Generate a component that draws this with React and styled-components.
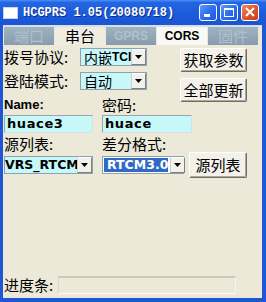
import React from 'react';
import styled, { createGlobalStyle } from 'styled-components';

const cjk = `"Noto Sans CJK SC", "Noto Sans", sans-serif`;
const latin = `"Liberation Sans", Arial, sans-serif`;
const wide = `"DejaVu Sans", Verdana, sans-serif`;

const GlobalStyle = createGlobalStyle`
  html, body {
    margin: 0;
    padding: 0;
    width: 266px;
    height: 302px;
    overflow: hidden;
    background: #1f56d6;
  }
`;

const Window = styled.div`
  width: 266px;
  height: 302px;
  display: flex;
  flex-direction: column;
  background: #ece9d8;
`;

const TitleBar = styled.div`
  height: 25px;
  flex: none;
  display: flex;
  align-items: center;
  padding: 0 7px 0 4px;
  box-sizing: border-box;
  background: linear-gradient(to bottom, #4a8ff7 0%, #2366e4 10%, #1c5bdb 55%, #1a55d2 100%);
`;

const AppIcon = styled.div`
  width: 13px;
  height: 10px;
  background: #fff;
  box-shadow: 0 0 0 1px #c8d4f0;
`;

const Title = styled.div`
  margin-left: 6px;
  font-family: "Liberation Mono", monospace;
  font-weight: 700;
  font-size: 12px;
  color: #fff;
  text-shadow: 1px 1px #0b2d8c;
  white-space: nowrap;
`;

const CaptionGroup = styled.div`
  margin-left: auto;
  display: flex;
  gap: 3px;
`;

const CaptionButton = styled.div`
  width: 18px;
  height: 17px;
  box-sizing: border-box;
  border: 1px solid #fff;
  border-radius: 3px;
  display: flex;
  align-items: center;
  justify-content: center;
  background: ${p => p.$close
    ? 'linear-gradient(135deg, #f08b62 0%, #e0552a 50%, #c8401a 100%)'
    : 'linear-gradient(135deg, #5c9cfb 0%, #2d6ef0 50%, #1f58dc 100%)'};
`;

const Frame = styled.div`
  flex: 1;
  min-height: 0;
  display: flex;
  flex-direction: column;
  border-style: solid;
  border-color: #1f56d6;
  border-width: 0 4px 4px 3px;
  background: #ece9d8;
`;

const TabStrip = styled.div`
  height: 20px;
  flex: none;
  display: flex;
  gap: 1px;
  padding: 2px 0 0 1px;
  box-sizing: border-box;
  background: linear-gradient(#d6dfe6 0 2px, #ece9d8 2px);
`;

const tabBg = {
  dim: 'linear-gradient(#a0b3c2, #879cad)',
  open: '#efece2',
  front: '#f8f8f4',
};

const Tab = styled.div`
  width: 50px;
  height: 18px;
  display: flex;
  align-items: center;
  justify-content: center;
  font-family: ${p => (p.$latin ? latin : cjk)};
  font-size: ${p => (p.$latin ? '12px' : '15px')};
  font-weight: ${p => (p.$latin ? 700 : 400)};
  line-height: 18px;
  background: ${p => tabBg[p.$state]};
  color: ${p => (p.$state === 'dim' ? '#b0c0cc' : '#000')};
`;

const Panel = styled.div`
  flex: 1;
  display: flex;
  flex-direction: column;
  padding: 3px 0 4px 1px;
`;

const TopSection = styled.div`
  display: flex;
  align-items: flex-start;
`;

const LeftCol = styled.div`
  width: 176px;
  display: flex;
  flex-direction: column;
`;

const RightCol = styled.div`
  display: flex;
  flex-direction: column;
  gap: 6px;
`;

const Row = styled.div`
  display: flex;
  align-items: center;
  height: ${p => p.$h || 18}px;
  margin-top: ${p => p.$mt || 0}px;
`;

const Label = styled.div`
  width: ${p => (p.$w ? `${p.$w}px` : 'auto')};
  flex: none;
  font-family: ${p => (p.$latin ? latin : cjk)};
  font-size: ${p => (p.$latin ? '13px' : '15px')};
  font-weight: ${p => (p.$latin ? 700 : 400)};
  line-height: 16px;
  color: #000;
  white-space: nowrap;
`;

const ComboBox = styled.div`
  width: ${p => p.$w}px;
  height: 18px;
  flex: none;
  margin-left: ${p => p.$ml || 0}px;
  box-sizing: border-box;
  border: 1px solid #8fa0ae;
  display: flex;
  background: ${p => (p.$selected ? '#fff' : '#c6f8fa')};
`;

const ComboValue = styled.div`
  flex: 1;
  min-width: 0;
  white-space: nowrap;
  display: flex;
  align-items: center;
  padding-left: ${p => p.$pl ?? 3}px;
  font-family: ${cjk};
  font-size: 14px;
  line-height: 16px;
  color: #000;
`;

const Selection = styled.div`
  flex: 1;
  margin: 1px 2px 1px 1px;
  padding-left: 3px;
  display: flex;
  align-items: center;
  background: #316ac5;
  color: #fff;
  font-family: ${wide};
  font-weight: 700;
  font-size: 12.5px;
  line-height: 14px;
`;

const Bold = styled.span`
  font-family: ${p => (p.$narrow ? latin : wide)};
  font-weight: 700;
  font-size: ${p => (p.$narrow ? '12px' : '12.5px')};
`;

const DropButton = styled.div`
  width: 15px;
  flex: none;
  box-sizing: border-box;
  display: flex;
  align-items: center;
  justify-content: center;
  background: #f2f1ec;
  border: 1px solid;
  border-color: #fff #808080 #808080 #d4d0c8;
`;

const TextBox = styled.div`
  width: ${p => p.$w}px;
  height: 18px;
  flex: none;
  margin-left: ${p => p.$ml || 0}px;
  box-sizing: border-box;
  border: 1px solid;
  border-color: #9aa6ac #d8e0e2 #d8e0e2 #9aa6ac;
  background: #c6f8fa;
  padding-left: 2px;
  display: flex;
  align-items: center;
  font-family: ${wide};
  font-weight: 700;
  font-size: 13px;
  line-height: 16px;
  letter-spacing: 0.6px;
  color: #000;
`;

const PushButton = styled.div`
  width: ${p => p.$w}px;
  height: ${p => p.$h}px;
  flex: none;
  margin-left: ${p => p.$ml || 0}px;
  box-sizing: border-box;
  display: flex;
  align-items: center;
  justify-content: center;
  font-family: ${cjk};
  font-size: 15px;
  line-height: 18px;
  color: #000;
  background: #f3f1ea;
  border: 1px solid;
  border-color: #fff #716f64 #716f64 #fff;
  box-shadow: inset -1px -1px #aca899;
  border-radius: 2px;
`;

const Spacer = styled.div`
  flex: 1;
`;

const ProgressBar = styled.div`
  width: 178px;
  height: 18px;
  box-sizing: border-box;
  border-style: solid;
  border-width: 2px 1px 1px 1px;
  border-color: #cdc9b8 #f6f5ef #fbfaf6 #dcd8c8;
  background: #ece9d8;
`;

const Arrow = () => (
  <svg width="7" height="4" viewBox="0 0 7 4">
    <polygon points="0,0 7,0 3.5,4" fill="#000" />
  </svg>
);

const Combo = ({ w, ml, pl, selected, children }) => (
  <ComboBox $w={w} $ml={ml} $selected={selected}>
    {selected ? <Selection>{children}</Selection> : <ComboValue $pl={pl}>{children}</ComboValue>}
    <DropButton><Arrow /></DropButton>
  </ComboBox>
);

const tabs = [
  { text: '端口', state: 'dim' },
  { text: '串台', state: 'open' },
  { text: 'GPRS', state: 'dim', latin: true },
  { text: 'CORS', state: 'front', latin: true },
  { text: '固件', state: 'dim' },
];

export default function App() {
  return (
    <Window>
      <GlobalStyle />
      <TitleBar>
        <AppIcon />
        <Title>HCGPRS 1.05(20080718)</Title>
        <CaptionGroup>
          <CaptionButton>
            <svg width="16" height="15" viewBox="0 0 16 15">
              <rect x="4" y="9" width="6" height="3" fill="#fff" />
            </svg>
          </CaptionButton>
          <CaptionButton>
            <svg width="16" height="15" viewBox="0 0 16 15">
              <rect x="3.5" y="3.5" width="9" height="8" fill="none" stroke="#fff" strokeWidth="1" />
              <rect x="3" y="3" width="10" height="2" fill="#fff" />
            </svg>
          </CaptionButton>
          <CaptionButton $close>
            <svg width="16" height="15" viewBox="0 0 16 15">
              <path d="M4 3 L12 11 M12 3 L4 11" stroke="#fff" strokeWidth="2" />
            </svg>
          </CaptionButton>
        </CaptionGroup>
      </TitleBar>
      <Frame>
        <TabStrip>
          {tabs.map(t => (
            <Tab key={t.text} $state={t.state} $latin={t.latin}>{t.text}</Tab>
          ))}
        </TabStrip>
        <Panel>
          <TopSection>
            <LeftCol>
              <Row>
                <Label $w={76}>拨号协议:</Label>
                <Combo w={67}>内嵌<Bold $narrow>TCI</Bold></Combo>
              </Row>
              <Row $mt={6}>
                <Label $w={76}>登陆模式:</Label>
                <Combo w={67}>自动</Combo>
              </Row>
              <Row $h={16} $mt={7}>
                <Label $w={98} $latin>Name:</Label>
                <Label>密码:</Label>
              </Row>
            </LeftCol>
            <RightCol>
              <PushButton $w={67} $h={24}>获取参数</PushButton>
              <PushButton $w={67} $h={24}>全部更新</PushButton>
            </RightCol>
          </TopSection>
          <Row $mt={2}>
            <TextBox $w={89}>huace3</TextBox>
            <TextBox $w={90} $ml={9}>huace</TextBox>
          </Row>
          <Row $h={16} $mt={3}>
            <Label $w={98}>源列表:</Label>
            <Label>差分格式:</Label>
          </Row>
          <Row $h={26}>
            <Combo w={89} pl={0}><Bold>VRS_RTCM</Bold></Combo>
            <Combo w={82} ml={9} selected>RTCM3.0</Combo>
            <PushButton $w={58} $h={26} $ml={5}>源列表</PushButton>
          </Row>
          <Spacer />
          <Row>
            <Label $w={54}>进度条:</Label>
            <ProgressBar />
          </Row>
        </Panel>
      </Frame>
    </Window>
  );
}
